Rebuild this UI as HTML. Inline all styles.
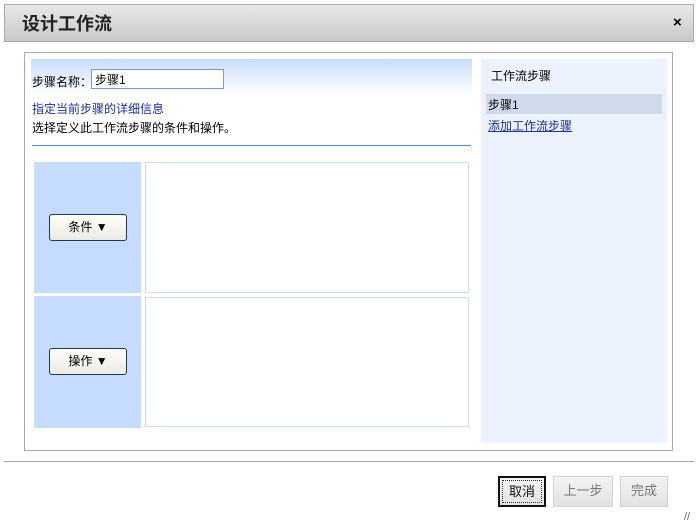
<!DOCTYPE html><html><head><meta charset="utf-8"><style>
body{margin:0;width:698px;height:528px;background:#fff;position:relative;font-family:"Liberation Sans","Noto Sans CJK SC",sans-serif;font-size:12px;overflow:hidden}
.a{position:absolute}
.btn{position:absolute;border:1px solid #1c3a5e;border-radius:3px;background:linear-gradient(#fdfdfb,#ecebe3);text-align:center;line-height:25px;font-size:12px;box-sizing:border-box}
.fb{position:absolute;background:linear-gradient(#f4f4f4,#e2e2e2);border:1px solid #d4d4d4;color:#777;text-align:center;line-height:28px;box-sizing:border-box;font-size:13px}
</style></head><body>
<div class="a" style="left:4px;top:4px;width:690px;height:38px;box-sizing:border-box;border:1px solid #aaa;background:linear-gradient(#e8e8e8,#c9c9c9)"></div>
<div class="a" style="left:22px;top:10px;font-size:18px;font-weight:bold;color:#222">设计工作流</div>
<div class="a" style="left:673px;top:14px;font-size:15px;font-weight:bold">×</div>
<div class="a" style="left:24px;top:52px;width:649px;height:399px;box-sizing:border-box;border:1px solid #aaa"></div>
<div class="a" style="left:31px;top:59px;width:441px;height:36px;background:linear-gradient(#c9dcfb,#fff)"></div>
<div class="a" style="left:32px;top:73px">步骤名称：</div>
<div class="a" style="left:91px;top:69px;width:133px;height:20px;box-sizing:border-box;border:1px solid #7f9db9;background:#fff;padding:1px 3px;font-size:12px">步骤1</div>
<div class="a" style="left:32px;top:100px;color:#1a2ea0">指定当前步骤的详细信息</div>
<div class="a" style="left:32px;top:119px">选择定义此工作流步骤的条件和操作。</div>
<div class="a" style="left:32px;top:145px;width:439px;height:1px;background:#4b8fcf"></div>
<div class="a" style="left:34px;top:162px;width:107px;height:131px;background:#c5dbff"></div>
<div class="a" style="left:34px;top:296px;width:107px;height:132px;background:#c5dbff"></div>
<div class="a" style="left:145px;top:162px;width:324px;height:131px;box-sizing:border-box;border:1px solid #d0ddee"></div>
<div class="a" style="left:145px;top:297px;width:324px;height:130px;box-sizing:border-box;border:1px solid #d0ddee"></div>
<div class="btn" style="left:49px;top:214px;width:78px;height:27px">条件 ▼</div>
<div class="btn" style="left:49px;top:348px;width:78px;height:27px">操作 ▼</div>
<div class="a" style="left:481px;top:59px;width:186px;height:384px;background:#edf3fe"></div>
<div class="a" style="left:491px;top:67px">工作流步骤</div>
<div class="a" style="left:486px;top:94px;width:176px;height:20px;background:#d0daec"></div>
<div class="a" style="left:488px;top:96px">步骤1</div>
<div class="a" style="left:488px;top:117px;color:#1a2ea0;text-decoration:underline">添加工作流步骤</div>
<div class="a" style="left:4px;top:461px;width:690px;height:1px;background:#aaa"></div>
<div class="fb" style="left:498px;top:476px;width:48px;height:31px;border:2px solid #111;color:#111;outline:1px dotted #333;outline-offset:-5px">取消</div>
<div class="fb" style="left:553px;top:476px;width:60px;height:31px">上一步</div>
<div class="fb" style="left:620px;top:476px;width:48px;height:31px">完成</div>
<div class="a" style="left:684px;top:511px;color:#666;font-size:11px">//</div>
</body></html>
